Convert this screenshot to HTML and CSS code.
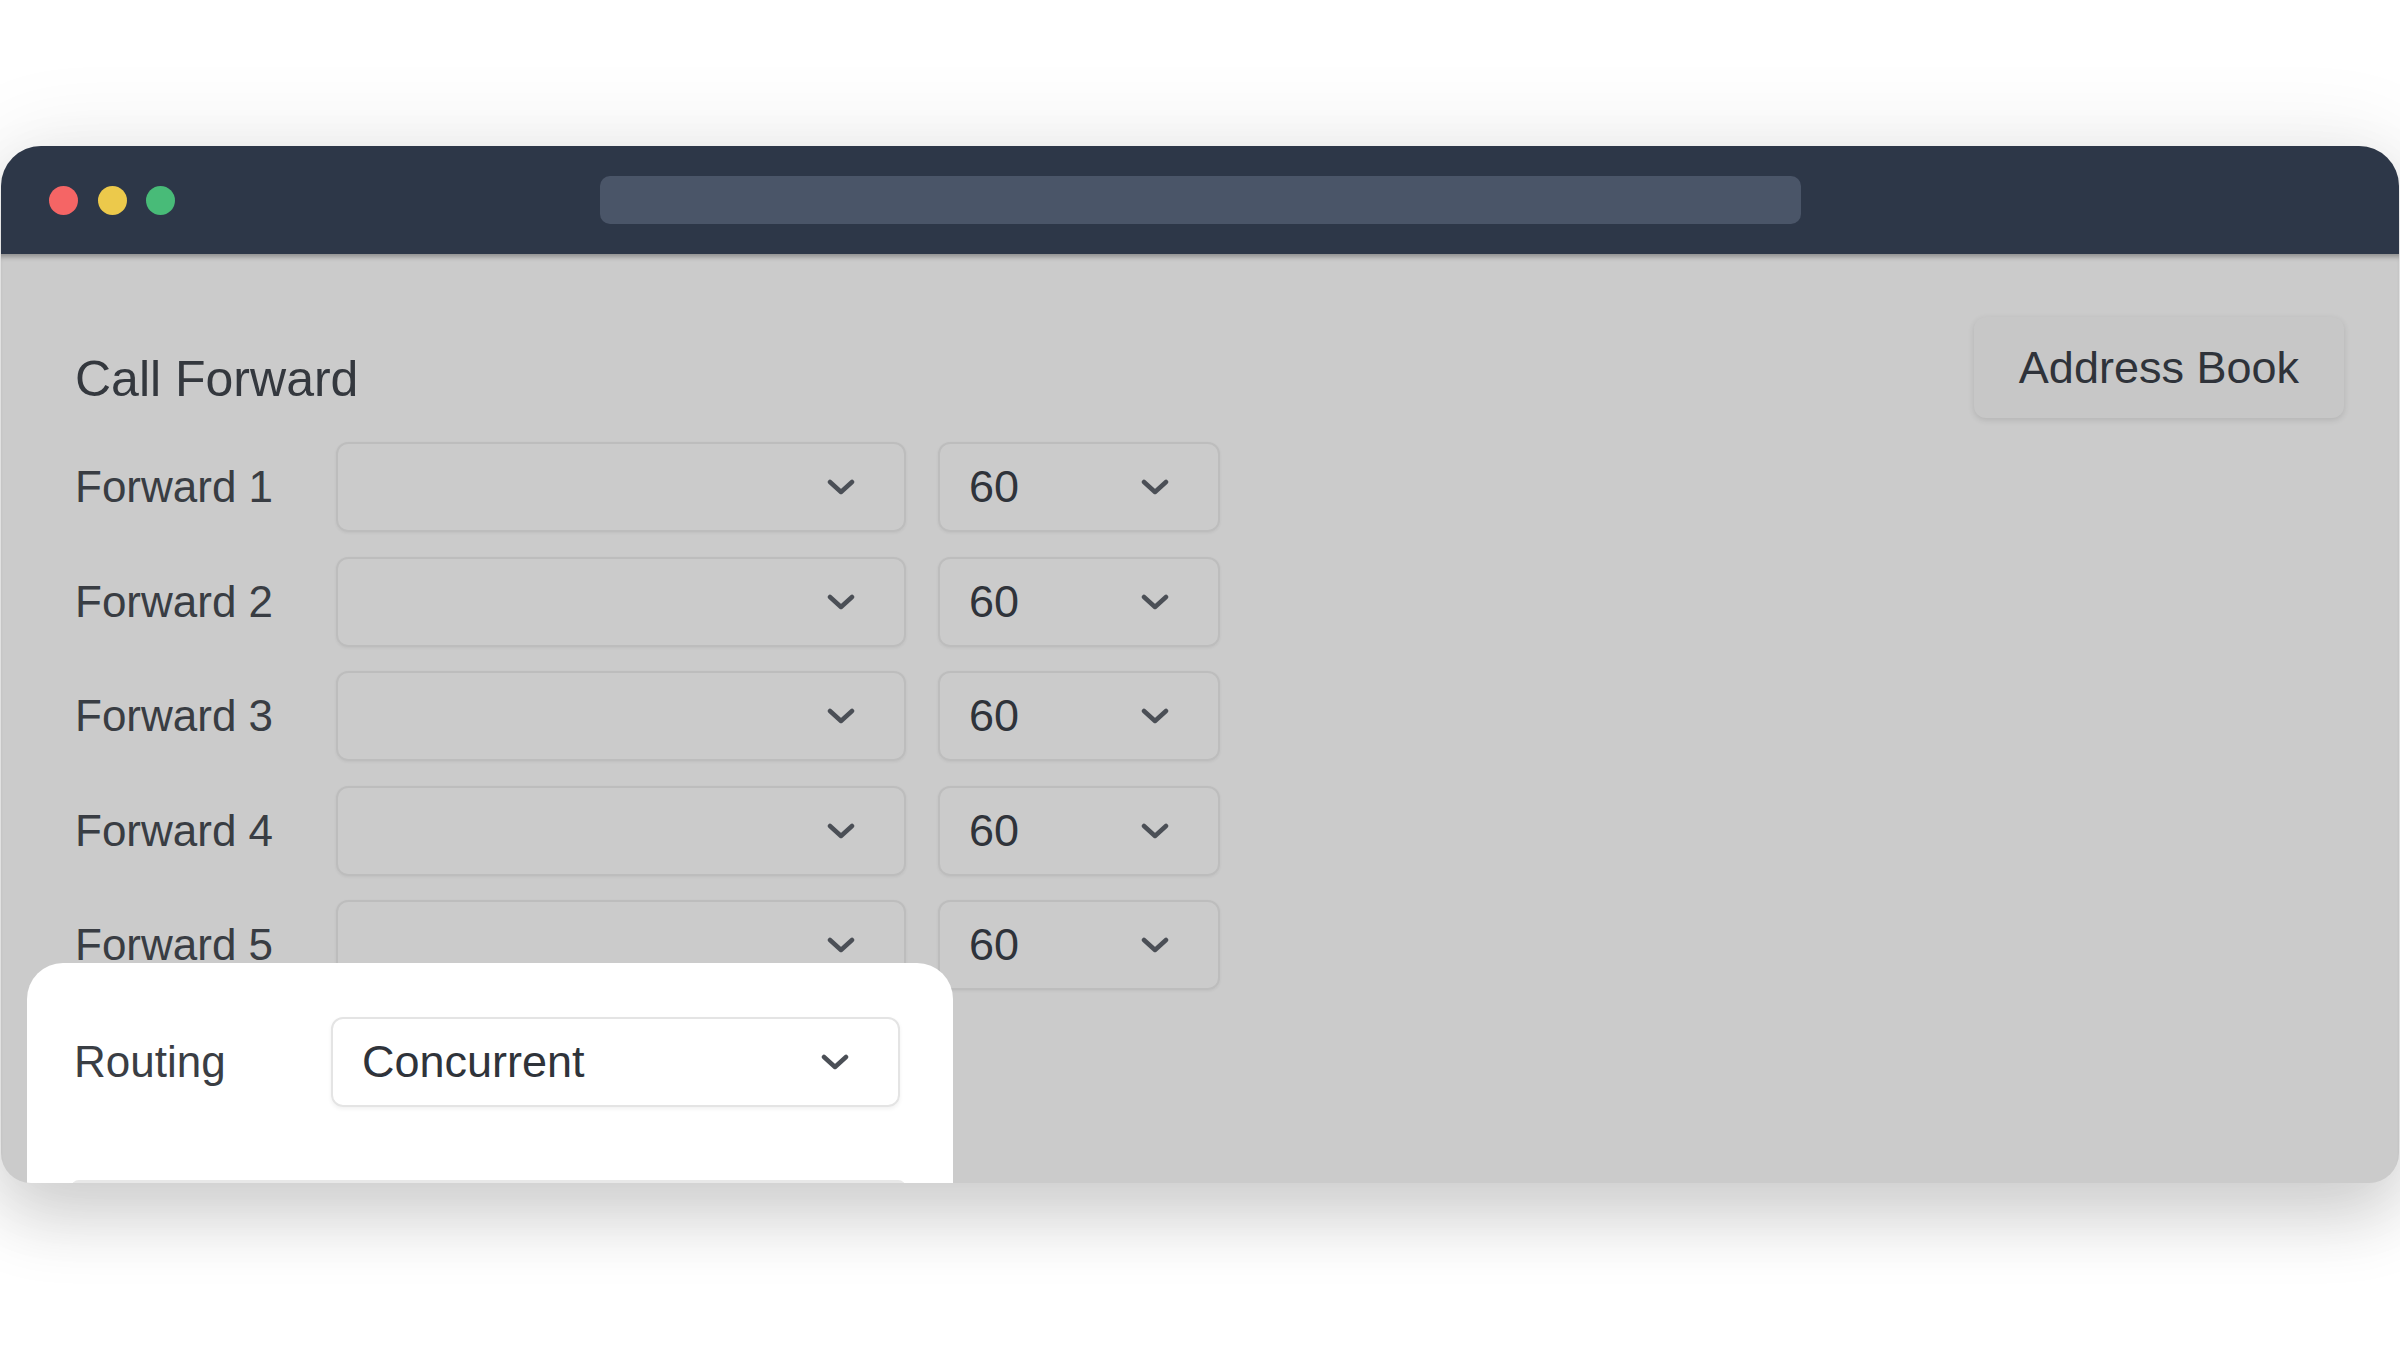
FILE: index.html
```html
<!DOCTYPE html>
<html lang="en">
<head>
    <meta charset="UTF-8">
    <meta name="viewport" content="width=device-width, initial-scale=1.0">
    <title>Call Forward</title>
    <link rel="stylesheet" href="styles.css">
</head>
<body>
    <div class="stage">
        <div class="window">
            <div class="titlebar">
                <div class="dots">
                    <span class="dot red"></span>
                    <span class="dot yellow"></span>
                    <span class="dot green"></span>
                </div>
                <div class="url-bar"></div>
            </div>

            <div class="content">
                <div class="header">
                    <h2>Call Forward</h2>
                    <button class="btn">Address Book</button>
                </div>

                <div class="rows">
                    <div class="row">
                        <label>Forward 1</label>
                        <div class="select wide"><span></span><svg class="chevron" viewBox="0 0 28 16"><polyline points="3,3 14,13 25,3"/></svg></div>
                        <div class="select short"><span>60</span><svg class="chevron" viewBox="0 0 28 16"><polyline points="3,3 14,13 25,3"/></svg></div>
                    </div>
                    <div class="row">
                        <label>Forward 2</label>
                        <div class="select wide"><span></span><svg class="chevron" viewBox="0 0 28 16"><polyline points="3,3 14,13 25,3"/></svg></div>
                        <div class="select short"><span>60</span><svg class="chevron" viewBox="0 0 28 16"><polyline points="3,3 14,13 25,3"/></svg></div>
                    </div>
                    <div class="row">
                        <label>Forward 3</label>
                        <div class="select wide"><span></span><svg class="chevron" viewBox="0 0 28 16"><polyline points="3,3 14,13 25,3"/></svg></div>
                        <div class="select short"><span>60</span><svg class="chevron" viewBox="0 0 28 16"><polyline points="3,3 14,13 25,3"/></svg></div>
                    </div>
                    <div class="row">
                        <label>Forward 4</label>
                        <div class="select wide"><span></span><svg class="chevron" viewBox="0 0 28 16"><polyline points="3,3 14,13 25,3"/></svg></div>
                        <div class="select short"><span>60</span><svg class="chevron" viewBox="0 0 28 16"><polyline points="3,3 14,13 25,3"/></svg></div>
                    </div>
                    <div class="row">
                        <label>Forward 5</label>
                        <div class="select wide"><span></span><svg class="chevron" viewBox="0 0 28 16"><polyline points="3,3 14,13 25,3"/></svg></div>
                        <div class="select short"><span>60</span><svg class="chevron" viewBox="0 0 28 16"><polyline points="3,3 14,13 25,3"/></svg></div>
                    </div>
                </div>

                <!-- highlighted routing option, sits above the dimmed form -->
                <div class="spotlight">
                    <div class="row">
                        <label>Routing</label>
                        <div class="select light"><span>Concurrent</span><svg class="chevron" viewBox="0 0 28 16"><polyline points="3,3 14,13 25,3"/></svg></div>
                    </div>
                    <div class="next-field"></div>
                </div>
            </div>
        </div>
    </div>
</body>
</html>
```

FILE: styles.css
```css
html, body {
    height: 100%;
}

body {
    margin: 0;
    background-color: #ffffff;
    font-family: "Liberation Sans", Arial, sans-serif;
}

.stage {
    height: 1350px;
    box-sizing: border-box;
    padding: 146px 1px 0;
    overflow: hidden;
}

.window {
    position: relative;
    height: 1037px;
    display: flex;
    flex-direction: column;
    border-radius: 40px 40px 30px 30px;
    background-color: #cbcbcb;
    box-shadow: 0 0 90px 10px rgba(0,0,0,0.07), 0 35px 70px rgba(0,0,0,0.16);
}

.titlebar {
    height: 108px;
    flex-shrink: 0;
    display: grid;
    grid-template-columns: 1fr 1201px 1fr;
    align-items: center;
    border-radius: 40px 40px 0 0;
    background-color: #2d3748;
}

.dots {
    display: flex;
    gap: 19.5px;
    padding-left: 48px;
}

.dot {
    width: 29px;
    height: 29px;
    border-radius: 50%;
}

.red { background-color: #f56565; }
.yellow { background-color: #ecc94b; }
.green { background-color: #48bb78; }

.url-bar {
    height: 48px;
    border-radius: 10px;
    background-color: #4a5568;
}

.content {
    flex: 1;
    position: relative;
    overflow: hidden;
    padding: 63px 55px 0 74px;
    border-radius: 0 0 30px 30px;
    box-shadow: inset 0 6px 5px -3px rgba(0,0,0,0.3);
}

.header {
    display: flex;
    justify-content: space-between;
    align-items: flex-start;
    margin-bottom: 24px;
}

h2 {
    margin: 32px 0 0;
    font-size: 50px;
    line-height: 60px;
    font-weight: normal;
    color: #34383e;
}

.btn {
    height: 101px;
    padding: 0 45px;
    border: none;
    border-radius: 12px;
    background-color: #c7c7c7;
    box-shadow: 0 2px 6px rgba(0,0,0,0.12);
    font-family: inherit;
    font-size: 45px;
    color: #2f333a;
}

.rows {
    display: flex;
    flex-direction: column;
    gap: 24.5px;
}

.row {
    display: flex;
    align-items: center;
    height: 90px;
}

.row label {
    width: 261px;
    flex-shrink: 0;
    font-size: 44px;
    color: #393d43;
}

.select {
    box-sizing: border-box;
    height: 90px;
    display: flex;
    align-items: center;
    justify-content: space-between;
    padding: 0 49px 0 29px;
    border: 2px solid #bdbdbd;
    border-radius: 12px;
    box-shadow: 0 1px 3px rgba(0,0,0,0.06);
    font-size: 45px;
    color: #2f333a;
}

.select.wide { width: 570px; }
.select.short { width: 282px; margin-left: 32px; }

.chevron {
    width: 28px;
    height: 16px;
    flex-shrink: 0;
}

.chevron polyline {
    fill: none;
    stroke: #4b4f56;
    stroke-width: 4.5;
    stroke-linecap: round;
    stroke-linejoin: round;
}

.spotlight {
    position: absolute;
    left: 26px;
    top: 709px;
    width: 926px;
    height: 260px;
    box-sizing: border-box;
    padding: 54px 53px 0 47px;
    border-radius: 36px 36px 0 0;
    background-color: #ffffff;
}

.spotlight .row label {
    width: 257px;
    color: #3a3e44;
}

.select.light {
    width: 569px;
    border-color: #e4e4e4;
    box-shadow: 0 2px 4px rgba(0,0,0,0.06);
}

.next-field {
    height: 60px;
    margin: 73px 0 0 -3px;
    width: 835px;
    border-top: 3px solid #e8e8e8;
    border-radius: 8px 8px 0 0;
}
```
